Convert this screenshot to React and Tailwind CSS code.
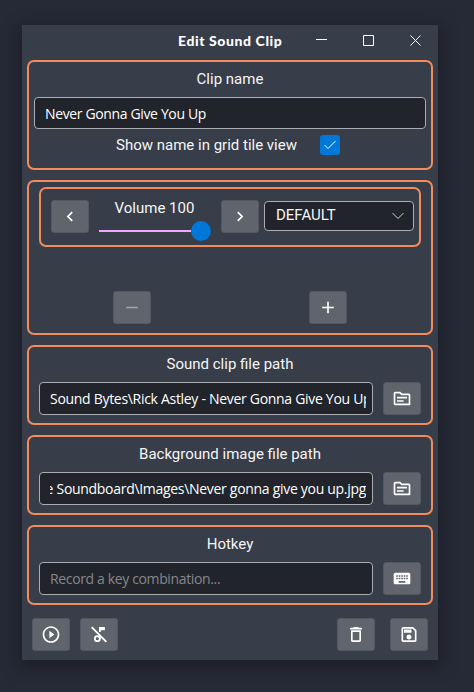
import {
  MdAdd,
  MdChevronLeft,
  MdChevronRight,
  MdKeyboard,
  MdOutlineDelete,
  MdOutlineSave,
  MdOutlineTopic,
  MdPlayCircleOutline,
  MdRemove,
} from "react-icons/md";

function MusicOffIcon({ size = 20, className = "" }) {
  return (
    <svg className={className} width={size} height={size} viewBox="0 0 24 24" fill="none" stroke="currentColor">
      <path d="M3.2 3.2L20.8 20.8" strokeWidth="2.2" />
      <circle cx="10" cy="17" r="3" strokeWidth="2.2" />
      <path d="M13 17v-4.4M13 9V4" strokeWidth="2" />
      <path d="M12 3h7v4h-5v1.5l-2-1z" fill="currentColor" stroke="none" />
    </svg>
  );
}

function IconButton({ icon: Icon, label, className = "", color = "text-white" }) {
  return (
    <button
      aria-label={label}
      className={`flex h-[33px] w-[38px] shrink-0 items-center justify-center rounded-[3px] border border-[#535862] bg-[#5f646d] ${color} ${className}`}
    >
      <Icon className="-translate-y-[0.5px]" size={20} />
    </button>
  );
}

function Panel({ className = "", children }) {
  return (
    <section className={`rounded-[7px] border-2 border-[#f28b5e] ${className}`}>
      {children}
    </section>
  );
}

function Label({ className = "", children }) {
  return (
    <div className={`whitespace-nowrap text-center font-['Roboto',sans-serif] text-[15px] leading-5 text-[#f5f5f6] ${className}`}>
      {children}
    </div>
  );
}

function Field({ className = "", textClass = "text-white tracking-[-0.36px]", end = false, children }) {
  return (
    <div className={`flex items-center rounded-[4px] border border-[#a9acb0] bg-[#21242b] pl-[10px] pr-[6px] ${className}`}>
      <div className={`flex w-full overflow-hidden ${end ? "justify-end" : ""}`}>
        <span className={`shrink-0 whitespace-pre pt-px font-['Open_Sans',sans-serif] text-[14px] leading-5 ${textClass}`}>
          {children}
        </span>
      </div>
    </div>
  );
}

function FieldPanel({ title, icon, label, textClass = "text-white tracking-[-0.3px]", end, children }) {
  return (
    <Panel className="h-[80px] px-[10px] pt-[7px]">
      <Label>{title}</Label>
      <div className="mt-2 flex gap-[10px]">
        <Field className="h-[33px] w-[334px]" textClass={textClass} end={end}>{children}</Field>
        <IconButton icon={icon} label={label} />
      </div>
    </Panel>
  );
}

export default function App() {
  return (
    <div className="h-[692px] w-[474px] overflow-hidden bg-[#262a36] pl-[22px] pt-[25px]">
      <main className="h-[635px] w-[416px] bg-[#373d49] px-[5px] shadow-[0_4px_16px_3px_rgba(10,12,18,0.36)]">
        <header className="flex h-[35px] items-start pl-[151px] text-white">
          <h1 className="mt-[6px] w-[104px] whitespace-nowrap font-['Lato',sans-serif] text-[14px] font-black leading-5 tracking-[0.6px]">
            Edit Sound Clip
          </h1>
          <svg className="ml-[33px] mt-[9px]" width="108" height="14" viewBox="0 0 108 14" fill="none" stroke="currentColor">
            <path d="M1 5.5H12M48.5 1.5h10v10h-10zM95.5 1.5l10 10m0-10l-10 10" />
          </svg>
        </header>

        <div className="flex flex-col gap-[10px]">
          <Panel className="h-[110px] px-[5px] pt-[7px]">
            <Label>Clip name</Label>
            <Field className="mt-2 h-[32px]">Never Gonna Give You Up</Field>
            <div className="mt-[6px] flex h-5 items-center pl-[82px]">
              <Label className="w-[180px]">Show name in grid tile view</Label>
              <span className="ml-6 flex size-5 items-center justify-center rounded-[3px] bg-[#0078d7]">
                <svg width="14" height="12" viewBox="0 0 14 12" fill="none" stroke="#fff">
                  <path d="M1.5 6l3.5 3.5L12.5 2" />
                </svg>
              </span>
            </div>
          </Panel>

          <Panel className="h-[155px] px-[10px] pt-[5px]">
            <Panel className="flex h-[60px] pl-[10px] pt-[11px]">
              <IconButton icon={MdChevronLeft} label="Decrease volume" />
              <div className="ml-[10px] w-[112px]">
                <Label className="-mt-[2px] pr-px">Volume 100</Label>
                <div className="mt-[3px] flex h-5 items-center">
                  <div className="h-[2px] w-[92px] bg-[#efabff]" />
                  <div className="size-5 rounded-full bg-[#0078d7]" />
                </div>
              </div>
              <IconButton icon={MdChevronRight} label="Increase volume" className="ml-[10px]" />
              <div className="ml-[5px] mt-px flex h-[30px] w-[150px] items-center justify-between rounded-[4px] border border-[#a9acb0] bg-[#21242b] pl-[11px] pr-[9px]">
                <Label className="-mt-[2px]">DEFAULT</Label>
                <svg width="12" height="8" viewBox="0 0 12 8" fill="none" stroke="#d0d1d3">
                  <path d="M.5 1L6 6.5 11.5 1" />
                </svg>
              </div>
            </Panel>
            <div className="mt-[44px] flex gap-[158px] pl-[74px]">
              <IconButton icon={MdRemove} label="Remove output" color="text-[#a4a7ac]" />
              <IconButton icon={MdAdd} label="Add output" />
            </div>
          </Panel>

          <FieldPanel title="Sound clip file path" icon={MdOutlineTopic} label="Browse sounds">
            Sound Bytes\Rick Astley - Never Gonna Give You Up
          </FieldPanel>
          <FieldPanel title="Background image file path" icon={MdOutlineTopic} label="Browse images" end>
            {"e Soundboard\\Images\\Never gonna give you up.jpg"}
          </FieldPanel>
          <FieldPanel title="Hotkey" icon={MdKeyboard} label="Record hotkey" textClass="text-[#85878b] tracking-[-0.36px]">
            Record a key combination...
          </FieldPanel>
        </div>

        <footer className="mt-[13px] flex pl-[5px]">
          <IconButton icon={MdPlayCircleOutline} label="Play" />
          <IconButton icon={MusicOffIcon} label="Stop" className="ml-[10px]" />
          <IconButton icon={MdOutlineDelete} label="Delete" className="ml-[219px]" />
          <IconButton icon={MdOutlineSave} label="Save" className="ml-[15px]" />
        </footer>
      </main>
    </div>
  );
}
